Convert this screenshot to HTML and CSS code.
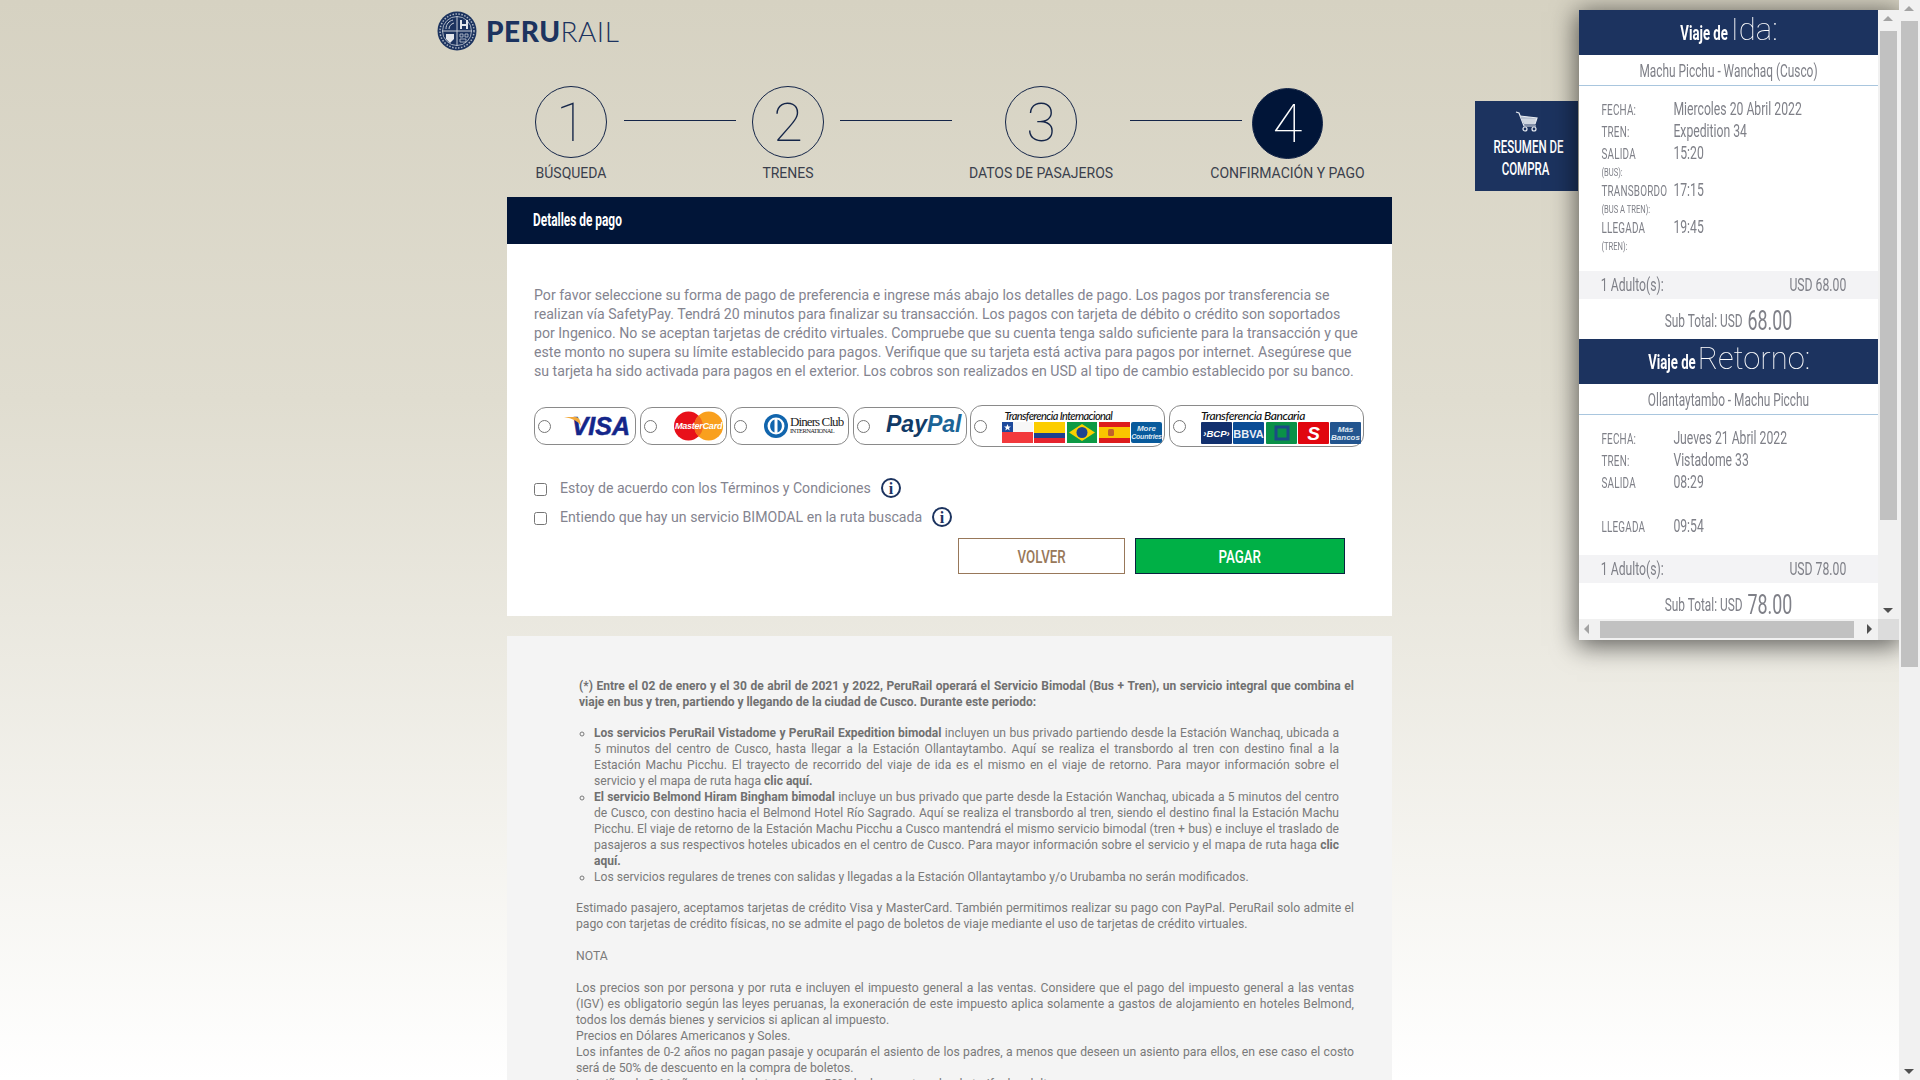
FILE: index.html
```html
<!DOCTYPE html>
<html lang="es">
<head>
    <meta charset="UTF-8">
    <title>PeruRail - Pago</title>
    <link rel="stylesheet" href="styles.css">
</head>
<body>

    <div class="page">
        <div class="logo">
            <svg class="seal" width="40" height="40" viewBox="0 0 40 40">
                <circle cx="20" cy="20" r="19.500" fill="#1c335f"/>
                <circle cx="20" cy="20" r="17" fill="none" stroke="#aab3c3" stroke-width="1.500" stroke-dasharray="1.500 1.500"/>
                <circle cx="20" cy="20" r="14.500" fill="none" stroke="#c5cbd6" stroke-width="0.800"/>
                <path d="M20 5v30M5 20h30" stroke="#c5cbd6" stroke-width="1"/>
                <path d="M9 18c0-5 3-8 7-9M12 18c0-3 2-5 5-6" fill="none" stroke="#c5cbd6" stroke-width="1"/>
                <path d="M23 9h2v4h4V9h2v9h-2v-3h-4v3h-2z" fill="#e3e6ec"/>
                <path d="M9 23h8v5l-4 4-4-4z" fill="#e3e6ec"/>
                <path d="M23 23h3v3h-3zM28 23h3v3h-3zM23 28h6v3h-6z" fill="none" stroke="#c5cbd6" stroke-width="0.800"/>
            </svg>
            <span class="logo-text"><b>PERU</b>RAIL</span>
        </div>

        <div class="steps">
            <div class="step"><div class="circle">1</div><div class="step-name">BÚSQUEDA</div></div>
            <div class="line line-a"></div>
            <div class="step"><div class="circle">2</div><div class="step-name">TRENES</div></div>
            <div class="line line-b"></div>
            <div class="step"><div class="circle">3</div><div class="step-name">DATOS DE PASAJEROS</div></div>
            <div class="line line-c"></div>
            <div class="step step-on"><div class="circle">4</div><div class="step-name">CONFIRMACIÓN Y PAGO</div></div>
        </div>

        <div class="bar"><span class="bar-text">Detalles de pago</span></div>

        <div class="card">
            <p class="intro">Por favor seleccione su forma de pago de preferencia e ingrese más abajo los detalles de pago. Los pagos por transferencia se realizan vía SafetyPay. Tendrá 20 minutos para finalizar su transacción. Los pagos con tarjeta de débito o crédito son soportados por Ingenico. No se aceptan tarjetas de crédito virtuales. Compruebe que su cuenta tenga saldo suficiente para la transacción y que este monto no supera su límite establecido para pagos. Verifique que su tarjeta está activa para pagos por internet. Asegúrese que su tarjeta ha sido activada para pagos en el exterior. Los cobros son realizados en USD al tipo de cambio establecido por su banco.</p>

            <div class="pay-row">
                <label class="pay pay-visa">
                    <input type="radio" name="pay">
                    <svg width="72" height="24" viewBox="0 0 72 24">
                        <text x="69" y="21" text-anchor="end" class="visa-txt">VISA</text>
                        <path d="M3 3h11q4 0 5 4l1 5q-4-7-17-9z" fill="#f2a93b"/>
                    </svg>
                </label>
                <label class="pay pay-mc">
                    <input type="radio" name="pay">
                    <svg width="54" height="30" viewBox="0 0 54 30">
                        <circle cx="15" cy="15" r="15" fill="#e8101a"/>
                        <circle cx="36" cy="15" r="15" fill="#f9a01e"/>
                        <path d="M25.500 4.300a15 15 0 0 1 0 21.400a15 15 0 0 1 0-21.400z" fill="#f4691c"/>
                        <text x="25.500" y="18.500" text-anchor="middle" class="mc-txt">MasterCard</text>
                    </svg>
                </label>
                <label class="pay pay-din">
                    <input type="radio" name="pay">
                    <svg width="80" height="26" viewBox="0 0 80 26">
                        <circle cx="12" cy="13" r="12" fill="#1165ad"/>
                        <circle cx="12" cy="13" r="8.500" fill="#fff"/>
                        <path d="M10.500 6.500v13a7 7 0 0 1 0-13zM13.500 6.500v13a7 7 0 0 0 0-13z" fill="#1165ad"/>
                        <text x="26" y="13" class="din-txt">Diners Club</text>
                        <text x="26" y="20" class="din-small">INTERNATIONAL</text>
                    </svg>
                </label>
                <label class="pay pay-pp">
                    <input type="radio" name="pay">
                    <svg width="80" height="26" viewBox="0 0 80 26">
                        <text x="1" y="19" class="pp-txt"><tspan fill="#123a66">Pay</tspan><tspan fill="#1c6496">Pal</tspan></text>
                    </svg>
                </label>
                <label class="pay pay-wide">
                    <input type="radio" name="pay">
                    <div class="bank">
                        <div class="bank-title">Transferencia Internacional</div>
                        <svg width="160" height="21" viewBox="0 0 160 21">
                            <rect x="0" y="0" width="31" height="10" fill="#f7f7f7"/>
                            <rect x="0" y="0" width="11" height="10" fill="#1d4a9c"/>
                            <path d="M5.500 2l1 2.500h2.500l-2 1.600.7 2.500-2.200-1.500-2.200 1.500.7-2.500-2-1.600h2.500z" fill="#fff"/>
                            <rect x="0" y="10" width="31" height="11" fill="#f2393c"/>
                            <rect x="32" y="0" width="31" height="11" fill="#fccd00"/>
                            <rect x="32" y="11" width="31" height="5" fill="#1d3f8f"/>
                            <rect x="32" y="16" width="31" height="5" fill="#e6232e"/>
                            <rect x="65" y="0" width="30" height="21" fill="#0d9a45"/>
                            <path d="M80 2l13 8.500-13 8.500-13-8.500z" fill="#fbd000"/>
                            <circle cx="80" cy="10.500" r="5.500" fill="#1f4490"/>
                            <rect x="97" y="0" width="31" height="5" fill="#dd1c1c"/>
                            <rect x="97" y="5" width="31" height="11" fill="#fac400"/>
                            <rect x="97" y="16" width="31" height="5" fill="#dd1c1c"/>
                            <rect x="106" y="7" width="6" height="7" rx="1.500" fill="#c0602b"/>
                            <rect x="129" y="0" width="31" height="21" rx="2" fill="#085a9c"/>
                            <text x="144.500" y="9" class="bank-small">More</text>
                            <text x="144.500" y="17" class="bank-small bank-tight">Countries</text>
                        </svg>
                    </div>
                </label>
                <label class="pay pay-wide">
                    <input type="radio" name="pay">
                    <div class="bank">
                        <div class="bank-title bank-title-big">Transferencia Bancaria</div>
                        <svg width="160" height="22" viewBox="0 0 160 22">
                            <rect x="0" y="0" width="31" height="22" rx="1" fill="#12306e"/>
                            <text x="15.500" y="15" class="bcp">›BCP›</text>
                            <rect x="32" y="0" width="31" height="22" rx="1" fill="#0a4c96"/>
                            <text x="47.500" y="15.500" class="bbva">BBVA</text>
                            <rect x="65" y="0" width="31" height="22" rx="1" fill="#0a9148"/>
                            <rect x="75" y="5" width="12" height="12" fill="#0a9148" stroke="#1b4a86" stroke-width="3"/>
                            <rect x="97" y="0" width="31" height="22" rx="1" fill="#e1060f"/>
                            <text x="112.500" y="18" class="sco">S</text>
                            <rect x="129" y="0" width="31" height="22" rx="1" fill="#23558f"/>
                            <text x="144.500" y="10" class="bank-small">Más</text>
                            <text x="144.500" y="18" class="bank-small">Bancos</text>
                        </svg>
                    </div>
                </label>
            </div>

            <label class="check">
                <input type="checkbox">
                <span>Estoy de acuerdo con los Términos y Condiciones</span>
                <svg class="info" width="20" height="20" viewBox="0 0 20 20"><circle cx="10" cy="10" r="9" fill="none" stroke="#1c335f" stroke-width="2"/><text x="10" y="15.500" text-anchor="middle" class="info-i">i</text></svg>
            </label>
            <label class="check check-two">
                <input type="checkbox">
                <span>Entiendo que hay un servicio BIMODAL en la ruta buscada</span>
                <svg class="info" width="20" height="20" viewBox="0 0 20 20"><circle cx="10" cy="10" r="9" fill="none" stroke="#1c335f" stroke-width="2"/><text x="10" y="15.500" text-anchor="middle" class="info-i">i</text></svg>
            </label>

            <div class="actions">
                <button class="btn btn-back"><span>VOLVER</span></button>
                <button class="btn btn-pay"><span>PAGAR</span></button>
            </div>
        </div>

        <div class="terms">
            <p class="terms-head"><b>(*) Entre el 02 de enero y el 30 de abril de 2021 y 2022, PeruRail operará el Servicio Bimodal (Bus + Tren), un servicio integral que combina el viaje en bus y tren, partiendo y llegando de la ciudad de Cusco. Durante este periodo:</b></p>
            <ul class="terms-list">
                <li><b>Los servicios PeruRail Vistadome y PeruRail Expedition bimodal</b> incluyen un bus privado partiendo desde la Estación Wanchaq, ubicada a 5 minutos del centro de Cusco, hasta llegar a la Estación Ollantaytambo. Aquí se realiza el transbordo al tren con destino final a la Estación Machu Picchu. El trayecto de recorrido del viaje de ida es el mismo en el viaje de retorno. Para mayor información sobre el servicio y el mapa de ruta haga <b>clic aquí.</b></li>
                <li><b>El servicio Belmond Hiram Bingham bimodal</b> incluye un bus privado que parte desde la Estación Wanchaq, ubicada a 5 minutos del centro de Cusco, con destino hacia el Belmond Hotel Río Sagrado. Aquí se realiza el transbordo al tren, siendo el destino final la Estación Machu Picchu. El viaje de retorno de la Estación Machu Picchu a Cusco mantendrá el mismo servicio bimodal (tren + bus) e incluye el traslado de pasajeros a sus respectivos hoteles ubicados en el centro de Cusco. Para mayor información sobre el servicio y el mapa de ruta haga <b>clic aquí.</b></li>
                <li>Los servicios regulares de trenes con salidas y llegadas a la Estación Ollantaytambo y/o Urubamba no serán modificados.</li>
            </ul>
            <p class="terms-p">Estimado pasajero, aceptamos tarjetas de crédito Visa y MasterCard. También permitimos realizar su pago con PayPal. PeruRail solo admite el pago con tarjetas de crédito físicas, no se admite el pago de boletos de viaje mediante el uso de tarjetas de crédito virtuales.</p>
            <p class="terms-p">NOTA</p>
            <p class="terms-p">Los precios son por persona y por ruta e incluyen el impuesto general a las ventas. Considere que el pago del impuesto general a las ventas (IGV) es obligatorio según las leyes peruanas, la exoneración de este impuesto aplica solamente a gastos de alojamiento en hoteles Belmond, todos los demás bienes y servicios si aplican al impuesto.<br>Precios en Dólares Americanos y Soles.<br>Los infantes de 0-2 años no pagan pasaje y ocuparán el asiento de los padres, a menos que deseen un asiento para ellos, en ese caso el costo será de 50% de descuento en la compra de boletos.<br>Los niños de 3-11 años pagan boletos con un 50% de descuento sobre la tarifa de adulto.</p>
        </div>
    </div>

    <!-- resumen flotante -->
    <div class="tab">
        <svg width="24" height="22" viewBox="0 0 24 22" fill="none" stroke="#e8ecf2" stroke-width="1.200">
            <path d="M1 1l3 1 5 13h12"/>
            <path d="M5 5l17 2-2 6H9" fill="#b7c0cf"/>
            <path d="M7 9h14M8 11h12"/>
            <circle cx="10" cy="18" r="2"/>
            <circle cx="19" cy="18" r="2"/>
        </svg>
        <div class="tab-text">RESUMEN DE<br>COMPRA</div>
    </div>

    <div class="panel">
        <div class="panel-view">
            <div class="panel-inner">
                <div class="trip-head"><b>Viaje de</b> <span class="word word-ida">Ida:</span></div>
                <div class="route">Machu Picchu - Wanchaq (Cusco)</div>
                <div class="rows">
                    <div class="row"><span class="key">FECHA:</span><span class="val">Miercoles 20 Abril 2022</span></div>
                    <div class="row"><span class="key">TREN:</span><span class="val">Expedition 34</span></div>
                    <div class="row"><span class="key">SALIDA</span><span class="val">15:20</span></div>
                    <div class="sub-key">(BUS):</div>
                    <div class="row"><span class="key">TRANSBORDO</span><span class="val">17:15</span></div>
                    <div class="sub-key">(BUS A TREN):</div>
                    <div class="row"><span class="key">LLEGADA</span><span class="val">19:45</span></div>
                    <div class="sub-key">(TREN):</div>
                </div>
                <div class="fare"><span>1 Adulto(s):</span><span>USD 68.00</span></div>
                <div class="subtotal">Sub Total: USD <strong>68.00</strong></div>

                <div class="trip-head"><b>Viaje de</b> <span class="word word-back">Retorno:</span></div>
                <div class="route">Ollantaytambo - Machu Picchu</div>
                <div class="rows rows-back">
                    <div class="row"><span class="key">FECHA:</span><span class="val">Jueves 21 Abril 2022</span></div>
                    <div class="row"><span class="key">TREN:</span><span class="val">Vistadome 33</span></div>
                    <div class="row"><span class="key">SALIDA</span><span class="val">08:29</span></div>
                    <div class="sub-blank"></div>
                    <div class="row"><span class="key">LLEGADA</span><span class="val">09:54</span></div>
                </div>
                <div class="fare"><span>1 Adulto(s):</span><span>USD 78.00</span></div>
                <div class="subtotal">Sub Total: USD <strong>78.00</strong></div>
            </div>
        </div>

        <div class="sb sb-y">
            <i class="arrow arrow-up"></i>
            <div class="thumb thumb-panel"></div>
            <i class="arrow arrow-down"></i>
        </div>
        <div class="sb sb-x">
            <i class="arrow arrow-left"></i>
            <div class="thumb-x"></div>
            <i class="arrow arrow-right"></i>
        </div>
        <div class="sb-corner"></div>
    </div>

    <div class="sb sb-y sb-page">
        <i class="arrow arrow-up"></i>
        <div class="thumb thumb-page"></div>
        <i class="arrow arrow-down"></i>
    </div>

</body>
</html>
```

FILE: styles.css
```css
* {
    box-sizing: border-box;
}
html, body {
    margin: 0;
    height: 1080px;
    overflow: hidden;
}
body {
    font-family: Roboto, "Liberation Sans", sans-serif;
    background: linear-gradient(#d6d2c2, #e0ddd0 400px, #ffffff 1080px);
    color: #84848f;
}

.page {
    width: 885px;
    margin-left: 507px;
}

/* logo */
.logo {
    display: flex;
    align-items: center;
    height: 62px;
    margin-left: -70px;
}
.seal {
    flex: none;
}
.logo-text {
    margin-left: 9px;
    font-family: Lato, sans-serif;
    font-size: 28px;
    font-weight: 300;
    letter-spacing: 0.5px;
    color: #1c335f;
}
.logo-text b {
    font-weight: 900;
}

/* pasos */
.steps {
    display: flex;
    padding: 24px 0 0 28px;
    height: 135px;
}
.step {
    width: 72px;
    display: flex;
    flex-direction: column;
    align-items: center;
    flex: none;
}
.step-on {
    width: 71px;
}
.circle {
    width: 72px;
    height: 72px;
    flex: none;
    border: 1px solid #142548;
    border-radius: 50%;
    display: flex;
    align-items: center;
    justify-content: center;
    font-size: 54px;
    font-weight: 100;
    color: #142548;
}
.step-on .circle {
    width: 71px;
    height: 71px;
    margin-top: 2px;
    background: #011538;
    color: #fff;
}
.step-name {
    margin-top: 6px;
    font-size: 14px;
    line-height: 18px;
    color: #3a3f4c;
    white-space: nowrap;
}
.step-on .step-name {
    margin-top: 5px;
}
.line {
    flex: none;
    width: 112px;
    height: 1px;
    margin-top: 34px;
    background: #142548;
}
.line-a {
    margin-left: 17px;
    margin-right: 16px;
}
.line-b {
    margin-left: 16px;
    margin-right: 53px;
}
.line-c {
    margin-left: 53px;
    margin-right: 10px;
}

.bar {
    height: 47px;
    padding-left: 26px;
    background: #011538;
    color: #fff;
    font-size: 18px;
    font-weight: 700;
    line-height: 45px;
}
.bar-text {
    display: inline-block;
    transform: scaleX(0.66);
    transform-origin: 0 50%;
    white-space: nowrap;
}

.card {
    height: 372px;
    padding: 42px 30px 0 27px;
    background: #fff;
}
.intro {
    margin: 0;
    font-size: 14.130px;
    line-height: 19px;
}

.pay-row {
    display: flex;
    align-items: center;
    gap: 3.600px;
    height: 42px;
    margin-top: 24px;
}
.pay {
    display: flex;
    align-items: center;
    height: 38px;
    padding-left: 3px;
    border: 1px solid #8a8a8a;
    border-radius: 12px;
    flex: none;
}
.pay input {
    flex: none;
    margin: 0;
}
.pay-visa {
    width: 102px;
}
.pay-visa svg {
    margin-left: 10px;
}
.pay-mc {
    width: 87px;
}
.pay-mc svg {
    margin-left: 17px;
}
.pay-din {
    width: 119px;
}
.pay-din svg {
    margin-left: 17px;
}
.pay-pp {
    width: 114px;
}
.pay-pp svg {
    margin-left: 15px;
}
.pay-wide {
    width: 195px;
    height: 42px;
}
.bank {
    margin-left: 15px;
}
.bank-title {
    font-family: Lato, sans-serif;
    font-size: 11px;
    font-style: italic;
    font-weight: 500;
    line-height: 13px;
    color: #111;
    letter-spacing: -0.6px;
    margin-left: 2px;
}
.bank-title-big {
    font-size: 12px;
    letter-spacing: -0.45px;
    margin-left: 0;
}
.bank svg {
    display: block;
}
.visa-txt {
    font: italic 700 25px "Liberation Sans", sans-serif;
    letter-spacing: 0;
    fill: #14268a;
    stroke: #14268a;
    stroke-width: 0.500px;
}
.mc-txt {
    font: italic 700 9.500px "Liberation Sans", sans-serif;
    letter-spacing: -0.3px;
    fill: #fff;
}
.din-txt {
    font: 13px "Liberation Serif", serif;
    letter-spacing: -0.9px;
    fill: #222;
}
.din-small {
    font: 6.500px "Liberation Serif", serif;
    letter-spacing: -0.6px;
    fill: #222;
}
.pp-txt {
    font: italic 700 23px "Liberation Sans", sans-serif;
}
.bank-small {
    font: italic 700 8px "Liberation Sans", sans-serif;
    fill: #dfe8f2;
    text-anchor: middle;
}
.bank-tight {
    font-size: 7px;
    letter-spacing: -0.25px;
}
.bcp {
    font: italic 700 9.500px "Liberation Sans", sans-serif;
    fill: #fff;
    text-anchor: middle;
}
.bbva {
    font: 700 11px "Liberation Sans", sans-serif;
    fill: #e9eef6;
    text-anchor: middle;
}
.sco {
    font: italic 700 19px "Liberation Sans", sans-serif;
    fill: #fff;
    text-anchor: middle;
}

.check {
    display: flex;
    align-items: center;
    height: 20px;
    margin-top: 31px;
    font-size: 14.130px;
}
.check-two {
    margin-top: 9px;
}
.check input {
    flex: none;
    width: 13px;
    height: 13px;
    margin: 2px 13px 0 0;
}
.info {
    margin-left: 10px;
}
.info-i {
    font: 700 16px "Liberation Serif", serif;
    fill: #1c335f;
}

.actions {
    display: flex;
    justify-content: flex-end;
    gap: 10px;
    margin-top: 11px;
    padding-right: 17px;
}
.btn {
    height: 36px;
    background: #fff;
    font-family: Roboto, sans-serif;
    font-size: 18px;
    font-weight: 500;
    padding: 0;
}
.btn span {
    display: inline-block;
    transform: scaleX(0.74);
}
.btn-back {
    width: 167px;
    border: 1px solid #98785a;
    color: #98785a;
}
.btn-pay {
    width: 210px;
    border: 1px solid #0a2340;
    background: #00b046;
    color: #fff;
}

.terms {
    margin-top: 20px;
    height: 600px;
    padding: 42px 38px 0 69px;
    background: #f4f4f4;
    font-size: 12.200px;
    line-height: 16px;
    color: #7a7a7a;
}
.terms b {
    font-size: 12px;
    color: #707070;
}
.terms-head {
    margin: 0 0 0 3px;
    text-align: justify;
}
.terms-list {
    list-style: circle;
    margin: 15px 0;
    padding: 0 15px 0 18px;
    font-size: 12.130px;
    text-align: justify;
}
.terms-p {
    margin: 0 0 16px;
    text-align: justify;
}

/* panel */
.tab {
    position: fixed;
    left: 1475px;
    top: 101px;
    width: 103px;
    height: 90px;
    padding-top: 10px;
    background: #1c335f;
    color: #fff;
    font-size: 18px;
    line-height: 22px;
    font-weight: 500;
}
.tab svg {
    display: block;
    margin: 0 auto 3px;
}
.tab-text {
    padding-right: 3px;
    text-align: center;
    white-space: nowrap;
    transform: scaleX(0.64);
}

.panel {
    position: fixed;
    left: 1579px;
    top: 10px;
    width: 320px;
    height: 630px;
    display: grid;
    grid-template-columns: 299px 21px;
    grid-template-rows: 609px 21px;
    background: #fff;
    box-shadow: 0 4px 24px 2px rgba(0, 0, 0, 0.6);
    color: #7f8088;
}
.panel-view {
    overflow: hidden;
}
/* el contenido va en una fuente angosta: se comprime todo el bloque */
.panel-inner {
    width: 453px;
    transform: scaleX(0.66);
    transform-origin: 0 0;
}
.trip-head {
    height: 45px;
    background: #1c335f;
    color: #fff;
    text-align: center;
    line-height: 47px;
    font-size: 20px;
    white-space: nowrap;
}
.word {
    display: inline-block;
    transform: scaleX(1.515);
    font-weight: 100;
    font-size: 31px;
    line-height: 40px;
}
.word-ida {
    margin: 0 11px;
}
.word-back {
    margin: 0 27px;
}
.route {
    height: 31px;
    border-bottom: 1px solid #a9c6de;
    text-align: center;
    font-size: 18px;
    line-height: 31px;
}
.rows {
    height: 185px;
    padding: 13px 0 0 34px;
}
.rows-back {
    height: 140px;
}
.row {
    display: flex;
    height: 22px;
    align-items: center;
    font-size: 18.500px;
}
.val {
    margin-top: -2px;
}
.key {
    width: 109px;
    flex: none;
    font-size: 15px;
    letter-spacing: 0.3px;
    white-space: nowrap;
}
.sub-key {
    height: 15px;
    font-size: 11.500px;
    line-height: 15px;
}
.sub-blank {
    height: 22px;
}
.fare {
    display: flex;
    justify-content: space-between;
    height: 28px;
    padding: 0 48px 0 33px;
    background: #f3f3f5;
    font-size: 18.500px;
    line-height: 28px;
}
.subtotal {
    height: 40px;
    text-align: center;
    font-size: 18px;
    line-height: 44px;
}
.subtotal strong {
    margin-left: 3px;
    font-size: 27px;
    font-weight: 400;
    vertical-align: -3px;
    line-height: 20px;
}

/* barras de desplazamiento */
.sb {
    background: #f1f1f1;
}
.sb-y {
    position: relative;
    padding: 21px 2px;
}
.sb-page {
    position: fixed;
    right: 0;
    top: 0;
    width: 21px;
    height: 1080px;
}
.thumb {
    background: #c1c1c1;
}
.thumb-panel {
    height: 489px;
}
.thumb-page {
    height: 646px;
}
.sb-x {
    position: relative;
    background: #f1f1f1;
    grid-column: 1;
    padding: 2px 24px 2px 21px;
}
.thumb-x {
    height: 17px;
    background: #c1c1c1;
}
.sb-corner {
    background: #dcdcdc;
}
.arrow {
    position: absolute;
    width: 0;
    height: 0;
    border: 5px solid transparent;
}
.arrow-up {
    top: 6px;
    left: 5px;
    border-top: 0;
    border-bottom: 5px solid #a3a3a3;
}
.arrow-down {
    bottom: 6px;
    left: 5px;
    border-bottom: 0;
    border-top: 5px solid #505050;
}
.arrow-left {
    left: 5px;
    top: 5px;
    border-left: 0;
    border-right: 5px solid #a3a3a3;
}
.arrow-right {
    right: 6px;
    top: 5px;
    border-right: 0;
    border-left: 5px solid #505050;
}
```
